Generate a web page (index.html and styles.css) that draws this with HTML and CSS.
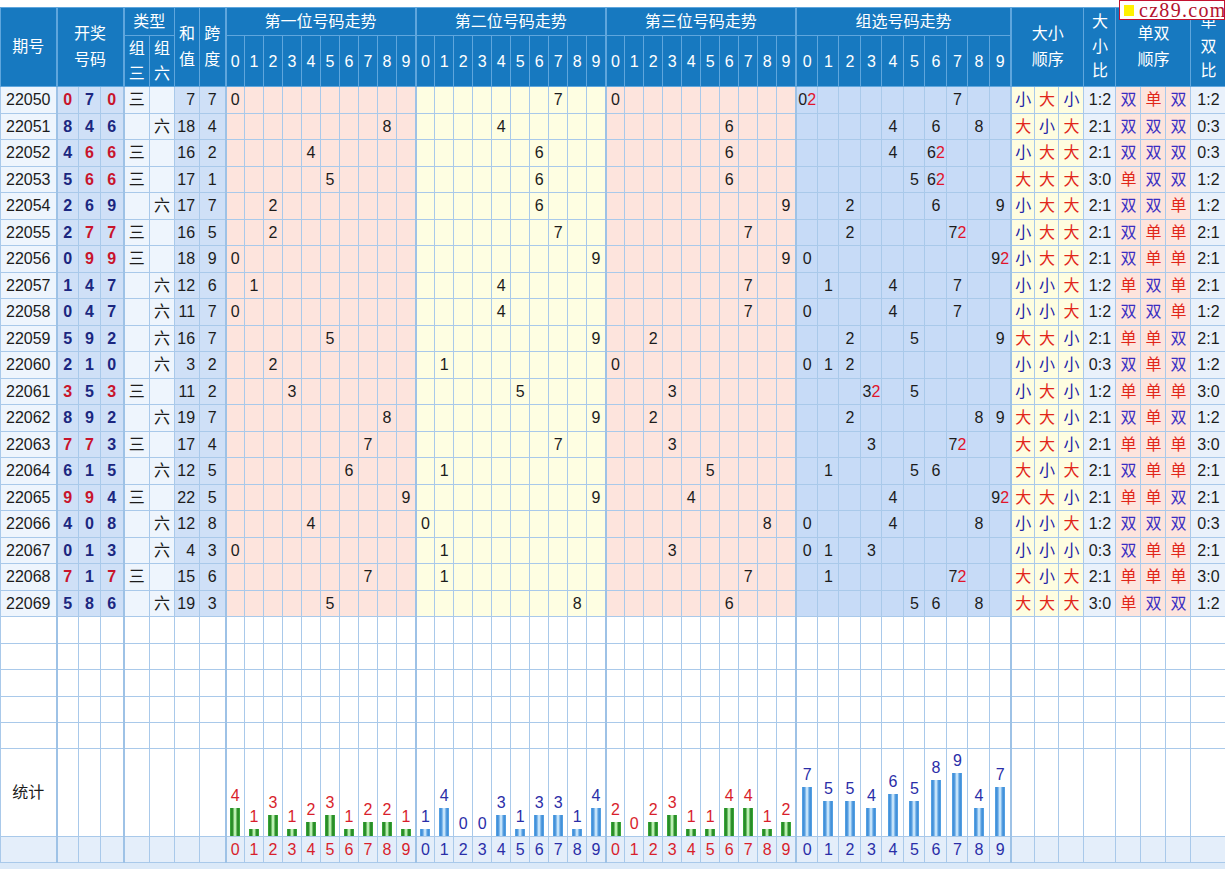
FILE: index.html
```html
<!DOCTYPE html>
<html lang="zh-CN">
<head>
<meta charset="utf-8">
<title>排列三走势图</title>
<link rel="stylesheet" href="styles.css">
</head>
<body>
<div class="page">
  <div class="logo"><span class="logo-sq"></span><span class="logo-txt">cz89.com</span></div>
  <table class="chart">
    <colgroup>
      <col class="w56"><col class="w22"><col class="w22"><col class="w23">
      <col class="w26"><col class="w25"><col class="w25"><col class="w26">
      <col class="w19" span="30">
      <col class="w22"><col class="w21"><col class="w22"><col class="w21"><col class="w22">
      <col class="w21"><col class="w22"><col class="w21"><col class="w22"><col class="w21">
      <col class="w24"><col class="w24"><col class="w25">
      <col class="w32">
      <col class="w25"><col class="w25"><col class="w25">
      <col class="w35">
    </colgroup>
    <thead>
      <tr class="h1">
        <th rowspan="2">期号</th>
        <th rowspan="2" colspan="3" class="gl">开奖<br>号码</th>
        <th colspan="2" class="gl">类型</th>
        <th rowspan="2">和<br>值</th>
        <th rowspan="2">跨<br>度</th>
        <th colspan="10" class="gl">第一位号码走势</th>
        <th colspan="10" class="gl">第二位号码走势</th>
        <th colspan="10" class="gl">第三位号码走势</th>
        <th colspan="10" class="gl">组选号码走势</th>
        <th rowspan="2" colspan="3" class="gl">大小<br>顺序</th>
        <th rowspan="2" class="v3">大<br>小<br>比</th>
        <th rowspan="2" colspan="3">单双<br>顺序</th>
        <th rowspan="2" class="v3">单<br>双<br>比</th>
      </tr>
      <tr class="h2" id="h2">
        <th class="gl">组<br>三</th>
        <th>组<br>六</th>
      </tr>
    </thead>
    <tbody id="tb"></tbody>
  </table>
  <div class="foot"></div>
</div>
<script src="app.js"></script>
</body>
</html>
```

FILE: styles.css
```css
html, body {
  margin: 0;
  padding: 0;
  background: #ffffff;
}
body {
  font-family: "Liberation Sans", "Noto Sans CJK SC", Arial, sans-serif;
  font-size: 16px;
  color: #1c1c1c;
  overflow: hidden;
}
.page {
  position: relative;
  width: 1225px;
  padding-top: 7px;
}
.logo {
  position: absolute;
  top: 0;
  right: 0;
  width: 100px;
  height: 18px;
  border: 1px solid #c4122f;
  background: #ffffff;
  display: flex;
  align-items: center;
  gap: 5px;
  padding-left: 4px;
  box-sizing: content-box;
  z-index: 2;
}
.logo-sq {
  width: 10px;
  height: 11px;
  background: #fff200;
  flex: none;
}
.logo-txt {
  font-family: "Liberation Serif", "DejaVu Serif", serif;
  font-size: 20px;
  line-height: 18px;
  letter-spacing: 1.3px;
  color: #b3122e;
}
.chart {
  border-collapse: collapse;
  table-layout: fixed;
  width: 1225px;
}
.w56 { width: 56px; }
.w35 { width: 35px; }
.w32 { width: 32px; }
.w26 { width: 26px; }
.w25 { width: 25px; }
.w24 { width: 24px; }
.w23 { width: 23px; }
.w22 { width: 22px; }
.w21 { width: 21px; }
.w19 { width: 19px; }

.chart th {
  background: #1779c0;
  color: #ffffff;
  font-weight: normal;
  border: 1px solid #5fa6dd;
  padding: 0;
  text-align: center;
  line-height: 26px;
  white-space: nowrap;
  overflow: hidden;
}
.chart th.gl { border-left: 2px solid #5fa6dd; }
.h1 th { height: 27px; }
.h2 th { height: 50px; line-height: 25px; }
.chart th.v3 { line-height: 24.5px; }

.chart td {
  border: 1px solid #a9c9ea;
  padding: 0;
  text-align: center;
  line-height: 24px;
  white-space: nowrap;
  overflow: hidden;
}
.chart td.gl { border-left: 2px solid #9ec2e6; }
tr.d:nth-child(odd) { height: 27px; }
tr.d:nth-child(even) { height: 26px; }
tr.e { height: 26px; }
tr.e1 { height: 27px; }
tr.s { height: 88px; }
tr.l { height: 26px; }

.qh, .lx { background: #eef5fd; }
.kj, .hz, .kd { background: #cfe0f7; }
.kj { font-weight: bold; }
.hz { text-align: right !important; padding-right: 4px !important; }
.pk { background: #fde4dd; }
.py { background: #fefee2; }
.zx { background: #c7dbf7; }
.dx { background: #fefde0; }
.rb { background: #e9f1fb; }
.ds { background: #fde4dd; }

.r { color: #c8142c; }
.nv { color: #1b2780; }
.zx i { font-style: normal; color: #e0142a; }
.big { color: #e1261a; }
.small { color: #2323a6; }
.dan { color: #e1261a; }
.shuang { color: #3a2ec2; }

tr.e td, tr.s td { background: #ffffff; }
tr.s td { vertical-align: bottom; }
tr.s td.st { vertical-align: middle; }
tr.l td { background: #e4eefa; }
.stat {
  display: flex;
  flex-direction: column;
  align-items: center;
  justify-content: flex-end;
}
.stat .n {
  line-height: 18px;
  margin-bottom: 3px;
}
.bar { width: 10px; }
.bar.g {
  background: linear-gradient(90deg, #3fae3f 0%, #1d7f1d 22%, #9be38f 42%, #f2fff0 50%, #9be38f 58%, #1d7f1d 78%, #3fae3f 100%);
}
.bar.b {
  background: linear-gradient(90deg, #5aa6e6 0%, #3b8ad6 20%, #a9d5f7 42%, #f3faff 50%, #a9d5f7 58%, #3b8ad6 80%, #5aa6e6 100%);
}
.cr { color: #d81e2c; }
.cb { color: #2a2ea8; }
.foot {
  height: 20px;
  background: #dbe9f8;
}
```

FILE: app.js
```js
(function () {
  var data = [
    ["22050", "070"], ["22051", "846"], ["22052", "466"], ["22053", "566"],
    ["22054", "269"], ["22055", "277"], ["22056", "099"], ["22057", "147"],
    ["22058", "047"], ["22059", "592"], ["22060", "210"], ["22061", "353"],
    ["22062", "892"], ["22063", "773"], ["22064", "615"], ["22065", "994"],
    ["22066", "408"], ["22067", "013"], ["22068", "717"], ["22069", "586"]
  ];

  var h2 = document.getElementById("h2");
  var hh = "";
  for (var g = 0; g < 4; g++) {
    for (var k = 0; k < 10; k++) {
      hh += "<th" + (k === 0 ? ' class="gl"' : "") + ">" + k + "</th>";
    }
  }
  h2.insertAdjacentHTML("beforeend", hh);

  function td(cls, html) {
    return "<td" + (cls ? ' class="' + cls + '"' : "") + ">" + (html === undefined || html === null ? "" : html) + "</td>";
  }

  var cnt = [[], [], [], []];
  for (var i = 0; i < 4; i++) for (var j = 0; j < 10; j++) cnt[i][j] = 0;

  var rows = "";
  data.forEach(function (d) {
    var n = d[1].split("").map(Number);
    var g3 = n[0] === n[1] || n[1] === n[2] || n[0] === n[2];
    var h = '<tr class="d">';
    h += td("qh", d[0]);
    n.forEach(function (v, i) {
      var rep = n.filter(function (x) { return x === v; }).length > 1;
      h += td("kj" + (i === 0 ? " gl" : "") + (rep ? " r" : " nv"), v);
    });
    h += td("lx gl", g3 ? "三" : "");
    h += td("lx", g3 ? "" : "六");
    var sum = n[0] + n[1] + n[2];
    var span = Math.max.apply(null, n) - Math.min.apply(null, n);
    h += td("hz", sum);
    h += td("kd", span);
    for (var p = 0; p < 3; p++) {
      cnt[p][n[p]]++;
      for (var k = 0; k < 10; k++) {
        h += td((p === 1 ? "py" : "pk") + (k === 0 ? " gl" : ""), n[p] === k ? k : "");
      }
    }
    for (var k2 = 0; k2 < 10; k2++) {
      var c = n.filter(function (x) { return x === k2; }).length;
      cnt[3][k2] += c;
      h += td("zx" + (k2 === 0 ? " gl" : ""), c ? k2 + (c > 1 ? "<i>" + c + "</i>" : "") : "");
    }
    var big = 0, odd = 0;
    n.forEach(function (v, i) {
      if (v >= 5) big++;
      h += td("dx" + (i === 0 ? " gl" : ""), v >= 5 ? '<span class="big">大</span>' : '<span class="small">小</span>');
    });
    h += td("rb", big + ":" + (3 - big));
    n.forEach(function (v) {
      if (v % 2) odd++;
      h += td("ds", v % 2 ? '<span class="dan">单</span>' : '<span class="shuang">双</span>');
    });
    h += td("rb", odd + ":" + (3 - odd));
    h += "</tr>";
    rows += h;
  });

  function plainRow(cls, mid, first, firstCls) {
    var h = '<tr class="' + cls + '">';
    h += td(firstCls || "", first || "");
    h += td("gl") + td("") + td("") + td("gl") + td("") + td("") + td("");
    h += mid;
    h += td("gl") + td("") + td("") + td("") + td("") + td("") + td("") + td("");
    h += "</tr>";
    return h;
  }

  var emptyMid = "";
  for (var g2 = 0; g2 < 4; g2++) for (var k3 = 0; k3 < 10; k3++) emptyMid += td(k3 === 0 ? "gl" : "");
  var eCls = ["e e1", "e", "e e1", "e", "e"];
  for (var e = 0; e < 5; e++) rows += plainRow(eCls[e], emptyMid);

  var statMid = "", labMid = "";
  for (var g4 = 0; g4 < 4; g4++) {
    var green = g4 === 0 || g4 === 2;
    for (var k4 = 0; k4 < 10; k4++) {
      var v = cnt[g4][k4];
      statMid += td(k4 === 0 ? "gl" : "",
        '<div class="stat"><span class="n ' + (green ? "cr" : "cb") + '">' + v + '</span>' +
        '<div class="bar ' + (green ? "g" : "b") + '" style="height:' + (v * 7) + 'px"></div></div>');
      labMid += td((k4 === 0 ? "gl " : "") + (green ? "cr" : "cb"), k4);
    }
  }
  rows += plainRow("s", statMid, "统计", "st");
  rows += plainRow("l", labMid);

  document.getElementById("tb").innerHTML = rows;
})();
```
